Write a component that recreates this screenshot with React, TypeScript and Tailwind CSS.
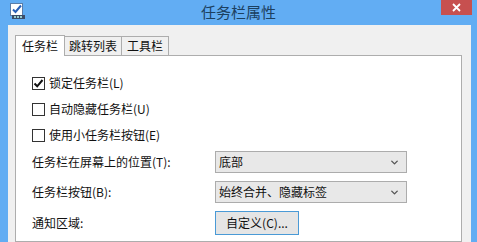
import { ChevronDown } from "lucide-react";

const font = { fontFamily: '"Noto Sans CJK SC", "Noto Sans", sans-serif' };

function Check({ checked, label }: { checked?: boolean; label: string }) {
  return (
    <div className="flex h-[26px] items-center gap-[4px]">
      <div className="flex h-[13px] w-[13px] items-center justify-center border border-[#333] bg-white">
        {checked && (
          <svg width="11" height="11" viewBox="0 0 11 11">
            <path d="M1.5 5.5 L4.2 8.3 L9.5 2" fill="none" stroke="#111" strokeWidth="2" />
          </svg>
        )}
      </div>
      <span>{label}</span>
    </div>
  );
}

function Select({ value }: { value: string }) {
  return (
    <div className="flex h-[22px] w-[192px] items-center justify-between border border-[#acacac] bg-[#e8e8e8] pl-[3px] pr-[6px]">
      <span>{value}</span>
      <ChevronDown size={11} strokeWidth={3} className="text-[#555]" />
    </div>
  );
}

export default function App() {
  return (
    <div className="flex h-[242px] w-[477px] flex-col overflow-hidden bg-[#62adf3] text-[12px] text-[#111]" style={font}>
      <div className="relative flex h-[25px] shrink-0 items-center justify-center">
        <div className="absolute left-[10px] top-[3px]">
          <svg width="16" height="16" viewBox="0 0 16 16">
            <rect x="0.5" y="0.5" width="12" height="12" fill="#fff" stroke="#5b7da8" />
            <path d="M3 6.5 L5.5 9 L11 2.5" fill="none" stroke="#2860b8" strokeWidth="2" />
            <rect x="2" y="12" width="13" height="4" fill="#3b4c68" />
            <rect x="4" y="13" width="2" height="2" fill="#9cc" />
            <rect x="7" y="13" width="2" height="2" fill="#9cc" />
            <rect x="10" y="13" width="2" height="2" fill="#9cc" />
          </svg>
        </div>
        <span className="text-[15px] text-[#1c4060]">任务栏属性</span>
        <div className="absolute right-[5px] top-0 flex h-[15px] w-[31px] items-center justify-center bg-[#c7504f]">
          <svg width="9" height="9" viewBox="0 0 9 9">
            <path d="M1 1 L8 8 M8 1 L1 8" stroke="#fff" strokeWidth="1.8" />
          </svg>
        </div>
      </div>
      <div className="ml-[8px] mr-[6px] flex flex-1 flex-col bg-[#f0f0f0] pl-[7px] pr-[9px] pt-[10px]">
        <div className="flex items-end">
          <div className="relative z-10 -mb-px flex h-[21px] w-[50px] items-center justify-center border border-b-0 border-[#adadad] bg-white">
            任务栏
          </div>
          <div className="flex h-[19px] w-[57px] items-center justify-center border border-l-0 border-b-0 border-[#adadad] bg-[#f0f0f0]">
            跳转列表
          </div>
          <div className="flex h-[19px] w-[47px] items-center justify-center border border-l-0 border-b-0 border-[#adadad] bg-[#f0f0f0]">
            工具栏
          </div>
        </div>
        <div className="flex flex-1 flex-col border border-[#adadad] bg-white pl-[16px] pt-[14px]">
          <Check checked label="锁定任务栏(L)" />
          <Check label="自动隐藏任务栏(U)" />
          <Check label="使用小任务栏按钮(E)" />
          <div className="mt-[3px] flex flex-col gap-[8px]">
            <div className="flex items-center">
              <span className="w-[183px]">任务栏在屏幕上的位置(T):</span>
              <Select value="底部" />
            </div>
            <div className="flex items-center">
              <span className="w-[183px]">任务栏按钮(B):</span>
              <Select value="始终合并、隐藏标签" />
            </div>
            <div className="flex items-center">
              <span className="w-[183px]">通知区域:</span>
              <div className="flex h-[24px] w-[84px] items-center justify-center border border-[#4a9ad6] bg-[#e5e5e5]">
                自定义(C)...
              </div>
            </div>
          </div>
        </div>
      </div>
    </div>
  );
}
